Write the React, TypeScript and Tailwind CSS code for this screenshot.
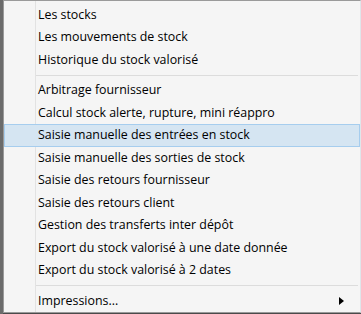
const groups: string[][] = [
  ["Les stocks", "Les mouvements de stock", "Historique du stock valorisé"],
  [
    "Arbitrage fournisseur",
    "Calcul stock alerte, rupture, mini réappro",
    "Saisie manuelle des entrées en stock",
    "Saisie manuelle des sorties de stock",
    "Saisie des retours fournisseur",
    "Saisie des retours client",
    "Gestion des transferts inter dépôt",
    "Export du stock valorisé à une date donnée",
    "Export du stock valorisé à 2 dates",
  ],
];

const active = "Saisie manuelle des entrées en stock";

function Item({ label, submenu }: { label: string; submenu?: boolean }) {
  const on = label === active;
  return (
    <div
      className={`relative flex h-[22.5px] items-center pl-[33px] pr-3 ${
        on ? "border border-[#a6cdee] bg-[#d5e5f2]" : "border border-transparent"
      }`}
    >
      <span className="flex-1 whitespace-nowrap">{label}</span>
      {submenu && (
        <svg width="5" height="8" viewBox="0 0 5 8" className="mr-[3px]">
          <path d="M0 0 L5 4 L0 8 Z" fill="#000" />
        </svg>
      )}
    </div>
  );
}

function Separator() {
  return (
    <div className="flex h-2 items-center pl-[31px] pr-[2px]">
      <div className="h-px flex-1 bg-[#dcdcdc]" />
    </div>
  );
}

export default function App() {
  return (
    <div
      className="flex h-[314px] w-[361px] bg-[#4a4a4a] text-[12.4px] text-black"
      style={{ fontFamily: '"Open Sans", "Noto Sans", sans-serif' }}
    >
      <div className="w-[3px] bg-[#6b6b6b]" />
      <div className="relative h-[313px] flex-1 border border-[#9a9a9a] border-r-[#dfe6ea] bg-[#f5f5f5] pt-[2.75px]">
        <div className="absolute bottom-0 left-[31px] top-0 w-px bg-[#e2e2e2]" />
        {groups[0].map((l) => (
          <Item key={l} label={l} />
        ))}
        <Separator />
        {groups[1].map((l) => (
          <Item key={l} label={l} />
        ))}
        <Separator />
        <Item label="Impressions..." submenu />
      </div>
    </div>
  );
}
